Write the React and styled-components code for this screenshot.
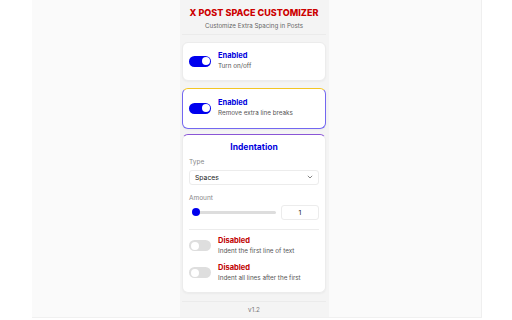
import { useState } from "react";
import styled, { createGlobalStyle } from "styled-components";

const GlobalStyle = createGlobalStyle`
  html, body {
    margin: 0;
    padding: 0;
    background: #ffffff;
    font-family: Inter, "Noto Sans", "Liberation Sans", sans-serif;
  }
  * {
    box-sizing: border-box;
  }
`;

const Toggle = ({ on, onClick }) => (
  <Switch $on={on} onClick={onClick}>
    <Knob $on={on} />
  </Switch>
);

const App = () => {
  const [settings, setSettings] = useState({
    enabled: true,
    lineBreaks: true,
    firstLine: false,
    hanging: false,
    type: "spaces",
    amount: 1,
  });

  const flip = (key) => setSettings({ ...settings, [key]: !settings[key] });

  return (
    <>
      <GlobalStyle />
      <Page>
        <Frame>
          <Column>
            <Header>
              <Title>X POST SPACE CUSTOMIZER</Title>
              <Subtitle>Customize Extra Spacing in Posts</Subtitle>
            </Header>

            {/* Main switch */}
            <Card>
              <ToggleRow>
                <Toggle on={settings.enabled} onClick={() => flip("enabled")} />
                <RowText>
                  <StateLabel $on={settings.enabled}>
                    {settings.enabled ? "Enabled" : "Disabled"}
                  </StateLabel>
                  <Hint>Turn on/off</Hint>
                </RowText>
              </ToggleRow>
            </Card>

            {/* Line breaks */}
            <Card $variant="highlight" $height={41}>
              <ToggleRow>
                <Toggle on={settings.lineBreaks} onClick={() => flip("lineBreaks")} />
                <RowText>
                  <StateLabel $on={settings.lineBreaks}>
                    {settings.lineBreaks ? "Enabled" : "Disabled"}
                  </StateLabel>
                  <Hint>Remove extra line breaks</Hint>
                </RowText>
              </ToggleRow>
            </Card>

            {/* Indentation */}
            <IndentCard>
              <CardTitle>Indentation</CardTitle>
              <FieldLabel>Type</FieldLabel>
              <SelectBox>
                <span>Spaces</span>
                <svg width="6" height="4" viewBox="0 0 6 4" fill="none">
                  <path d="M0.8 0.8L3 3L5.2 0.8" stroke="#666" strokeWidth="0.8" />
                </svg>
              </SelectBox>
              <FieldLabel $gap={8}>Amount</FieldLabel>
              <SliderRow>
                <Range
                  type="range"
                  min="1"
                  max="20"
                  value={settings.amount}
                  onChange={(e) => setSettings({ ...settings, amount: Number(e.target.value) })}
                />
                <NumberBox>{settings.amount}</NumberBox>
              </SliderRow>
              <Divider />
              <OptionRow>
                <Toggle on={settings.firstLine} onClick={() => flip("firstLine")} />
                <RowText>
                  <StateLabel $on={settings.firstLine}>
                    {settings.firstLine ? "Enabled" : "Disabled"}
                  </StateLabel>
                  <Hint>Indent the first line of text</Hint>
                </RowText>
              </OptionRow>
              <OptionRow $gap={7}>
                <Toggle on={settings.hanging} onClick={() => flip("hanging")} />
                <RowText>
                  <StateLabel $on={settings.hanging}>
                    {settings.hanging ? "Enabled" : "Disabled"}
                  </StateLabel>
                  <Hint>Indent all lines after the first</Hint>
                </RowText>
              </OptionRow>
            </IndentCard>

            <Footer>v1.2</Footer>
          </Column>
        </Frame>
      </Page>
    </>
  );
};

export default App;

const Page = styled.div`
  width: 512px;
  height: 320px;
  padding-left: 32px;
  overflow: hidden;
`;

const Frame = styled.div`
  width: 450px;
  height: 318px;
  background: #fafafa;
  border-right: 1px solid #efefef;
  border-bottom: 1px solid #f0f0f0;
  display: flex;
  padding-left: 148px;
`;

const Column = styled.div`
  width: 149px;
  height: 100%;
  background: #f4f4f4;
  padding: 0 3px 0 2px;
  display: flex;
  flex-direction: column;
`;

const Header = styled.div`
  height: 35px;
  border-bottom: 1px solid #ebebeb;
  text-align: center;
  padding-top: 6px;
`;

const Title = styled.div`
  font-size: 9px;
  font-weight: 800;
  color: #cc0000;
  line-height: 13px;
  letter-spacing: 0.05px;
  white-space: nowrap;
`;

const Subtitle = styled.div`
  font-size: 6.2px;
  color: #666666;
  line-height: 9px;
  margin-top: 2px;
`;

const Card = styled.div`
  height: ${(props) => props.$height || 39}px;
  margin-top: 7px;
  background: #ffffff;
  border: 1px solid ${(props) => (props.$variant === "highlight" ? "#7367f0" : "#ececec")};
  border-top-color: ${(props) => (props.$variant === "highlight" ? "#f3c623" : "#ececec")};
  border-radius: 6px;
  box-shadow: 0 1px 2px rgba(0, 0, 0, 0.04);
  display: flex;
  align-items: center;
  padding: 0 6px;
`;

const IndentCard = styled.div`
  height: 160px;
  margin-top: 5px;
  background: #ffffff;
  border: 1px solid #ececec;
  border-top-color: #8a55d6;
  border-radius: 6px;
  box-shadow: 0 1px 2px rgba(0, 0, 0, 0.04);
  padding: 0 6px;
`;

const ToggleRow = styled.div`
  display: flex;
  align-items: center;
  gap: 7px;
`;

const OptionRow = styled.div`
  display: flex;
  align-items: center;
  gap: 7px;
  margin-top: ${(props) => props.$gap || 0}px;
`;

const Switch = styled.div`
  width: 22px;
  height: 11px;
  border-radius: 6px;
  background: ${(props) => (props.$on ? "#0000ee" : "#dedede")};
  display: flex;
  align-items: center;
  justify-content: ${(props) => (props.$on ? "flex-end" : "flex-start")};
  padding: 0 1.5px;
  flex-shrink: 0;
  cursor: pointer;
`;

const Knob = styled.div`
  width: 8px;
  height: 8px;
  border-radius: 50%;
  background: #ffffff;
`;

const RowText = styled.div`
  display: flex;
  flex-direction: column;
`;

const StateLabel = styled.div`
  font-size: 7.5px;
  font-weight: 700;
  line-height: 10px;
  color: ${(props) => (props.$on ? "#0000dd" : "#c00000")};
`;

const Hint = styled.div`
  font-size: 6.3px;
  line-height: 10px;
  color: #555555;
`;

const CardTitle = styled.div`
  text-align: center;
  font-size: 8.5px;
  font-weight: 700;
  color: #0000dd;
  line-height: 12px;
  margin-top: 6px;
`;

const FieldLabel = styled.div`
  font-size: 6.5px;
  color: #888888;
  line-height: 10px;
  margin-top: ${(props) => props.$gap || 4}px;
`;

const SelectBox = styled.div`
  margin-top: 3px;
  height: 15px;
  border: 1px solid #ececec;
  border-radius: 3px;
  display: flex;
  align-items: center;
  justify-content: space-between;
  padding: 0 5px;
  font-size: 6.8px;
  color: #222222;
`;

const SliderRow = styled.div`
  margin-top: 2px;
  height: 15px;
  display: flex;
  align-items: center;
  justify-content: space-between;
  padding-left: 3px;
`;

const Range = styled.input`
  -webkit-appearance: none;
  appearance: none;
  width: 84px;
  min-width: 0;
  height: 3px;
  margin: 0;
  background: #dddddd;
  border-radius: 2px;
  outline: none;

  &::-webkit-slider-thumb {
    -webkit-appearance: none;
    width: 8px;
    height: 8px;
    border-radius: 50%;
    background: #0000ee;
    border: none;
  }
`;

const NumberBox = styled.div`
  width: 38px;
  height: 15px;
  flex-shrink: 0;
  border: 1px solid #ececec;
  border-radius: 3px;
  display: flex;
  align-items: center;
  justify-content: center;
  font-size: 6.8px;
  color: #222222;
`;

const Divider = styled.div`
  height: 1px;
  background: #ececec;
  margin-top: 9px;
  margin-bottom: 6px;
`;

const Footer = styled.div`
  margin-top: 8px;
  border-top: 1px solid #ebebeb;
  height: 16px;
  text-align: center;
  font-size: 6.3px;
  color: #777777;
  line-height: 16px;
`;
